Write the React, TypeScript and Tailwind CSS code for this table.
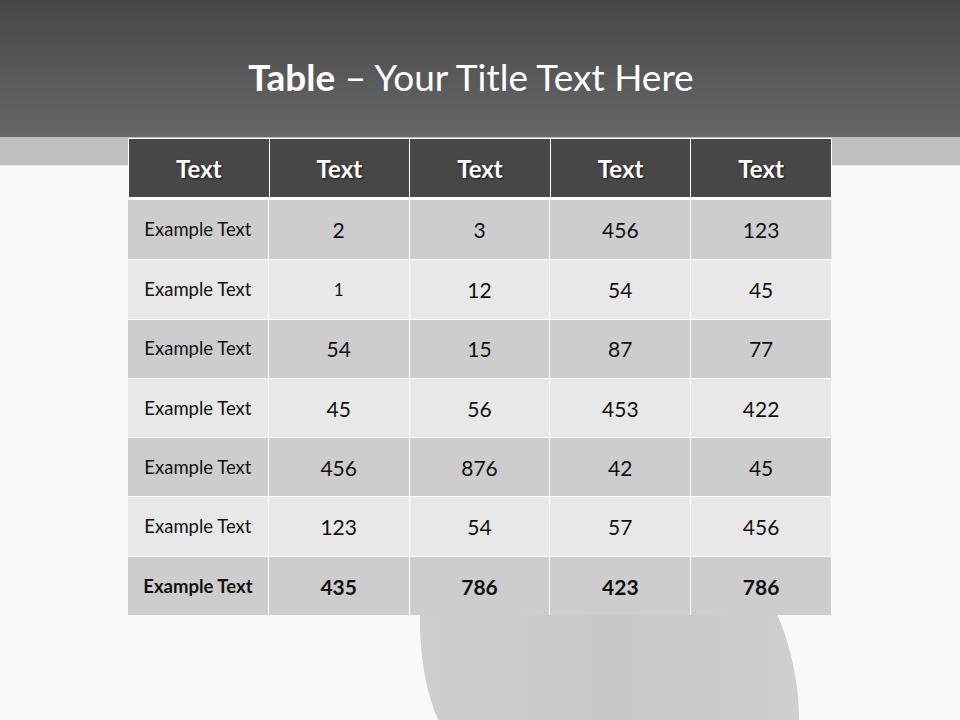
const header = ['Text', 'Text', 'Text', 'Text', 'Text'];

const rows = [
  ['Example Text', '2', '3', '456', '123'],
  ['Example Text', '1', '12', '54', '45'],
  ['Example Text', '54', '15', '87', '77'],
  ['Example Text', '45', '56', '453', '422'],
  ['Example Text', '456', '876', '42', '45'],
  ['Example Text', '123', '54', '57', '456'],
  ['Example Text', '435', '786', '423', '786'],
];

export default function App() {
  return (
    <div className="relative w-[960px] h-[720px] overflow-hidden bg-[#f9f9f9] font-['Lato','Open_Sans',sans-serif]">
      {/* soft shape behind the table */}
      <svg className="absolute left-0 top-0" width="960" height="720" viewBox="0 0 960 720">
        <defs>
          <linearGradient id="blob" x1="0" y1="0" x2="1" y2="0">
            <stop offset="0" stopColor="#cecece" />
            <stop offset="0.5" stopColor="#c8c8c8" />
            <stop offset="0.85" stopColor="#cbcbcb" />
            <stop offset="1" stopColor="#d0d0d0" />
          </linearGradient>
        </defs>
        <path
          d="M 420 612 L 776 612 C 789 640, 799 680, 799 720 L 438 720 C 426 692, 419 655, 420 612 Z"
          fill="url(#blob)"
        />
      </svg>

      {/* title band */}
      <div className="relative h-[137px] flex items-center justify-center bg-[linear-gradient(to_bottom,#474747,#676767)]">
        <h1 className="text-white text-[37px] leading-none mt-[15px] pr-[18px]">
          <span className="font-bold">Table</span> – Your Title Text Here
        </h1>
      </div>

      <div className="relative bg-[linear-gradient(to_bottom,#bfbfbf_0,#bfbfbf_28px,#e6e6e6_28px,#e6e6e6_29px,transparent_29px)]">
        <div className="w-[704px] ml-[128px] pt-[1px]">
          <div className="flex h-[60px] bg-[#474747] border border-white">
            {header.map((h, i) => (
              <div
                key={i}
                className={`flex-1 flex items-center justify-center text-white font-bold text-[24px] pt-[2px] [text-shadow:1px_1px_2px_rgba(0,0,0,0.7)] ${i > 0 ? 'border-l border-white' : ''}`}
              >
                {h}
              </div>
            ))}
          </div>
          <div className="h-[2px] bg-white" />
          {rows.map((row, r) => {
            const last = r === rows.length - 1;
            return (
              <div
                key={r}
                className={`flex h-[59.3px] ${r % 2 === 0 ? 'bg-[#cdcdcd]' : 'bg-[#e8e8e8]'} ${r > 0 ? 'border-t border-white' : ''} border-r border-[#e6e6e6]`}
              >
                {row.map((c, i) => (
                  <div
                    key={i}
                    className={`flex-1 flex items-center justify-center text-[#111] pt-[1px] ${i > 0 ? 'border-l border-white' : ''} ${i === 0 ? 'text-[18.5px]' : c === '1' ? 'text-[17px]' : 'text-[21px]'} ${last ? 'font-bold' : ''}`}
                  >
                    {c}
                  </div>
                ))}
              </div>
            );
          })}
        </div>
      </div>
    </div>
  );
}
